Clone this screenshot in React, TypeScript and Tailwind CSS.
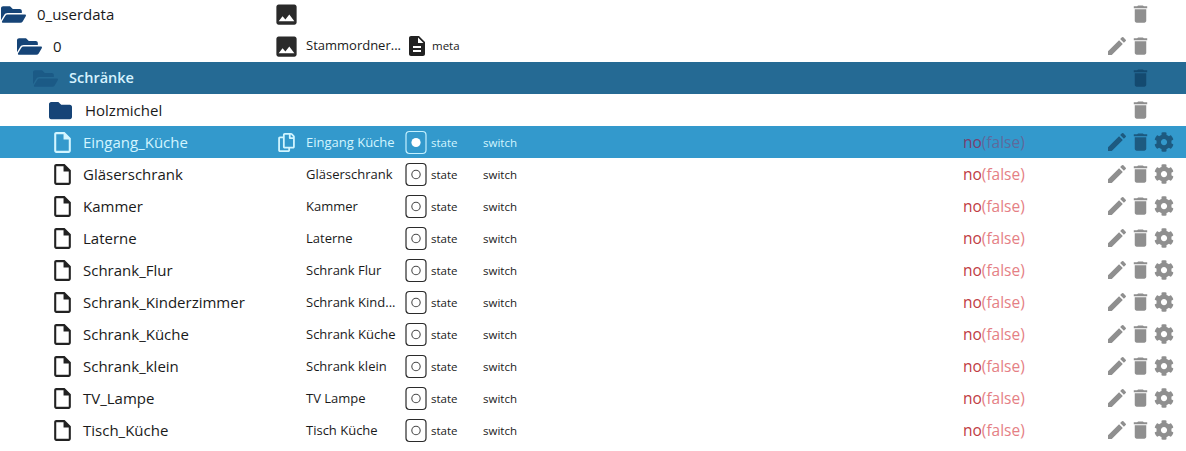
import { FaCog, FaFolder, FaFolderOpen, FaRegCopy } from "react-icons/fa";
import { MdDelete, MdDescription, MdEdit, MdImage, MdOutlineInsertDriveFile } from "react-icons/md";

interface Item {
  id: string;
  name: string;
}

const states: Item[] = [
  { id: "Gläserschrank", name: "Gläserschrank" },
  { id: "Kammer", name: "Kammer" },
  { id: "Laterne", name: "Laterne" },
  { id: "Schrank_Flur", name: "Schrank Flur" },
  { id: "Schrank_Kinderzimmer", name: "Schrank Kind..." },
  { id: "Schrank_Küche", name: "Schrank Küche" },
  { id: "Schrank_klein", name: "Schrank klein" },
  { id: "TV_Lampe", name: "TV Lampe" },
  { id: "Tisch_Küche", name: "Tisch Küche" },
];

function StateIcon({ selected }: { selected?: boolean }) {
  const color = selected ? "#c4f1ff" : "#2b2b2b";
  return (
    <svg width="22" height="25" viewBox="0 0 22 25" className="mt-[1px] shrink-0">
      <rect x="1" y="1.5" width="20" height="22" rx="3.5" fill="none" stroke={color} strokeWidth="1.2" />
      {selected ? (
        <circle cx="11" cy="12.5" r="4.6" fill="#ffffff" />
      ) : (
        <circle cx="11" cy="12.5" r="4.2" fill="none" stroke="#4a4a4a" strokeWidth="1.1" />
      )}
    </svg>
  );
}

function Actions({ edit, gear, tone }: { edit?: boolean; gear?: boolean; tone: string }) {
  return (
    <div className={`ml-auto flex h-full w-[87px] shrink-0 items-center pl-[6px] ${tone}`}>
      <span className="flex w-[24px] justify-center">{edit && <MdEdit size={24} />}</span>
      <span className="flex w-[23px] justify-center"><MdDelete size={24} /></span>
      <span className="flex w-[24px] justify-center">{gear && <FaCog size={20} />}</span>
    </div>
  );
}

function StateRow({ item, selected }: { item: Item; selected?: boolean }) {
  return (
    <div className={`flex h-8 items-center ${selected ? "bg-[#3399cc] text-[#d2f5ff]" : "text-[#1a1a1a]"}`}>
      <div className="flex w-[276px] shrink-0 items-center pl-[50px]">
        <MdOutlineInsertDriveFile size={25} className={selected ? "text-[#d2f5ff]" : "text-[#222222]"} />
        <span className="ml-[8px] text-[15px]">{item.id}</span>
      </div>
      <span className="flex w-[30px] shrink-0 items-center">
        {selected && <FaRegCopy size={19} className="ml-[1px]" />}
      </span>
      <span className="w-[99px] shrink-0 whitespace-nowrap pt-[1px] text-[13px]">{item.name}</span>
      <StateIcon selected={selected} />
      <span className="ml-[4px] w-[52px] shrink-0 pt-[1px] text-[11.5px]">state</span>
      <span className="pt-[1px] text-[11.5px]">switch</span>
      <div className="ml-[446px] w-[70px] shrink-0 pt-[1px] text-[15.5px]">
        <span className={selected ? "text-[#7a3f6e]" : "text-[#c03c44]"}>no</span>
        <span className={selected ? "text-[#5f6a9c]" : "text-[#e57f85]"}>(false)</span>
      </div>
      <Actions edit gear tone={selected ? "text-[#1d5a80]" : "text-[#8f8f8f]"} />
    </div>
  );
}

export default function App() {
  return (
    <div className="-mt-[2px] h-[453px] w-[1186px] overflow-hidden bg-white font-['Open_Sans',sans-serif]">
      <div className="flex h-8 items-center text-[#1a1a1a]">
        <div className="flex w-[276px] shrink-0 items-center pl-[1px]">
          <FaFolderOpen size={25} className="text-[#164477]" />
          <span className="ml-[11px] text-[15px]">0_userdata</span>
        </div>
        <MdImage size={27} className="-ml-[3px] text-[#2a2a2a]" />
        <Actions tone="text-[#8f8f8f]" />
      </div>
      <div className="flex h-8 items-center text-[#1a1a1a]">
        <div className="flex w-[276px] shrink-0 items-center pl-[17px]">
          <FaFolderOpen size={25} className="text-[#164477]" />
          <span className="ml-[11px] text-[15px]">0</span>
        </div>
        <MdImage size={27} className="-ml-[3px] shrink-0 text-[#2a2a2a]" />
        <span className="ml-[6px] w-[103px] shrink-0 whitespace-nowrap text-[13px]">Stammordner...</span>
        <MdDescription size={24} className="-ml-[4px] shrink-0 text-[#222222]" />
        <span className="ml-[3px] text-[11.5px]">meta</span>
        <Actions edit tone="text-[#8f8f8f]" />
      </div>
      <div className="flex h-8 items-center bg-[#256a94] font-semibold text-[#d6f3ff]">
        <div className="flex w-[276px] shrink-0 items-center pl-[33px]">
          <FaFolderOpen size={25} className="text-[#1b5a86]" />
          <span className="ml-[11px] text-[14.5px]">Schränke</span>
        </div>
        <Actions tone="text-[#144a70]" />
      </div>
      <div className="flex h-8 items-center text-[#1a1a1a]">
        <div className="flex w-[276px] shrink-0 items-center pl-[49px]">
          <FaFolder size={23} className="text-[#164477]" />
          <span className="ml-[13px] text-[15px]">Holzmichel</span>
        </div>
        <Actions tone="text-[#8f8f8f]" />
      </div>
      <StateRow item={{ id: "Eingang_Küche", name: "Eingang Küche" }} selected />
      {states.map((item) => (
        <StateRow key={item.id} item={item} />
      ))}
    </div>
  );
}
